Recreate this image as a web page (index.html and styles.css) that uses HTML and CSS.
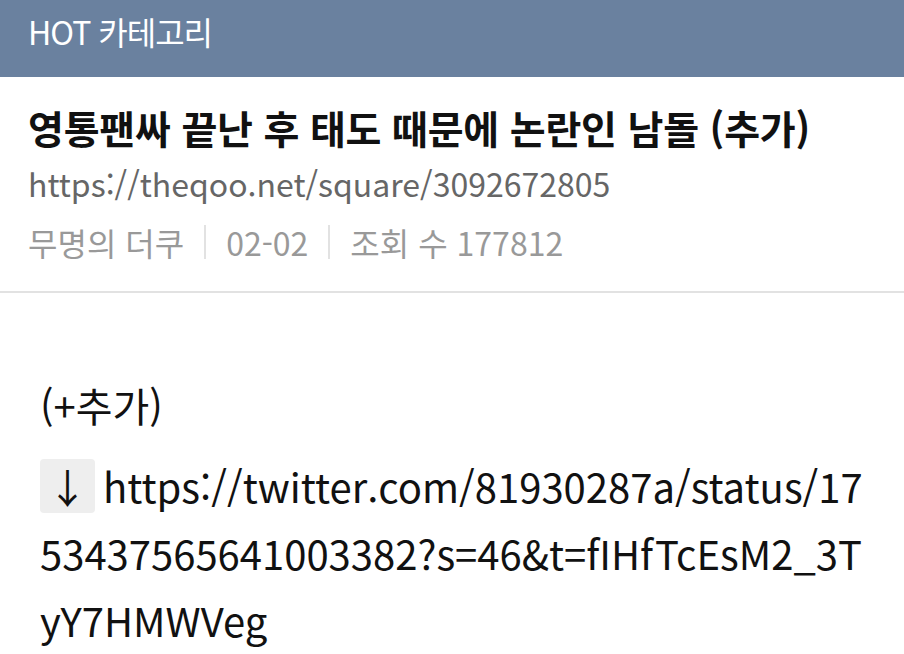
FILE: index.html
```html
<!DOCTYPE html>
<html lang="ko">
<head>
    <meta charset="UTF-8">
    <meta name="viewport" content="width=device-width, initial-scale=1.0">
    <title>HOT 카테고리</title>
    <link rel="stylesheet" href="styles.css">
</head>
<body>
    <header class="top-bar">HOT 카테고리</header>

    <div class="post-head">
        <h1 class="post-title">영통팬싸 끝난 후 태도 때문에 논란인 남돌 (추가)</h1>
        <div class="post-url">https://theqoo.net/square/3092672805</div>
        <div class="post-meta">
            <span>무명의 더쿠</span>
            <span class="sep"></span>
            <span>02-02</span>
            <span class="sep"></span>
            <span>조회 수 177812</span>
        </div>
    </div>

    <div class="post-body">
        <p>(+추가)</p>
        <p class="link-line"><span class="arrow">↓</span>https://twitter.com/81930287a/status/1753437565641003382?s=46&amp;t=fIHfTcEsM2_3TyY7HMWVeg</p>
    </div>
</body>
</html>
```

FILE: styles.css
```css
html, body {
    overflow: hidden;
}

body {
    margin: 0;
    padding: 0;
    font-family: "Noto Sans CJK KR", "Noto Sans", sans-serif;
    background: #fff;
    color: #111;
}

.top-bar {
    height: 77px;
    background-color: #6a819f;
    color: #fff;
    font-size: 32px;
    letter-spacing: -1px;
    line-height: 62px;
    padding-left: 28px;
    box-sizing: border-box;
}

.post-head {
    padding: 25px 28px 27px;
    border-bottom: 2px solid #e2e2e2;
}

.post-title {
    margin: 0;
    font-size: 39px;
    font-weight: bold;
    line-height: 50px;
    letter-spacing: -0.2px;
}

.post-url {
    margin-top: 9px;
    font-size: 32px;
    line-height: 44px;
    color: #666;
}

.post-meta {
    margin-top: 15px;
    font-size: 32px;
    line-height: 44px;
    color: #999;
    display: flex;
    align-items: center;
    gap: 20px;
}

.sep {
    width: 2px;
    height: 34px;
    background-color: #e2e2e2;
}

.post-body {
    padding: 79px 30px 0 40px;
    font-size: 40px;
    line-height: 67px;
}

.post-body p {
    margin: 0 0 14px;
}

.link-line {
    word-break: break-all;
}

.arrow {
    display: inline-block;
    background-color: #eeeeee;
    border-radius: 4px;
    width: 55px;
    line-height: 54px;
    text-align: center;
    margin-right: 8px;
}
```
